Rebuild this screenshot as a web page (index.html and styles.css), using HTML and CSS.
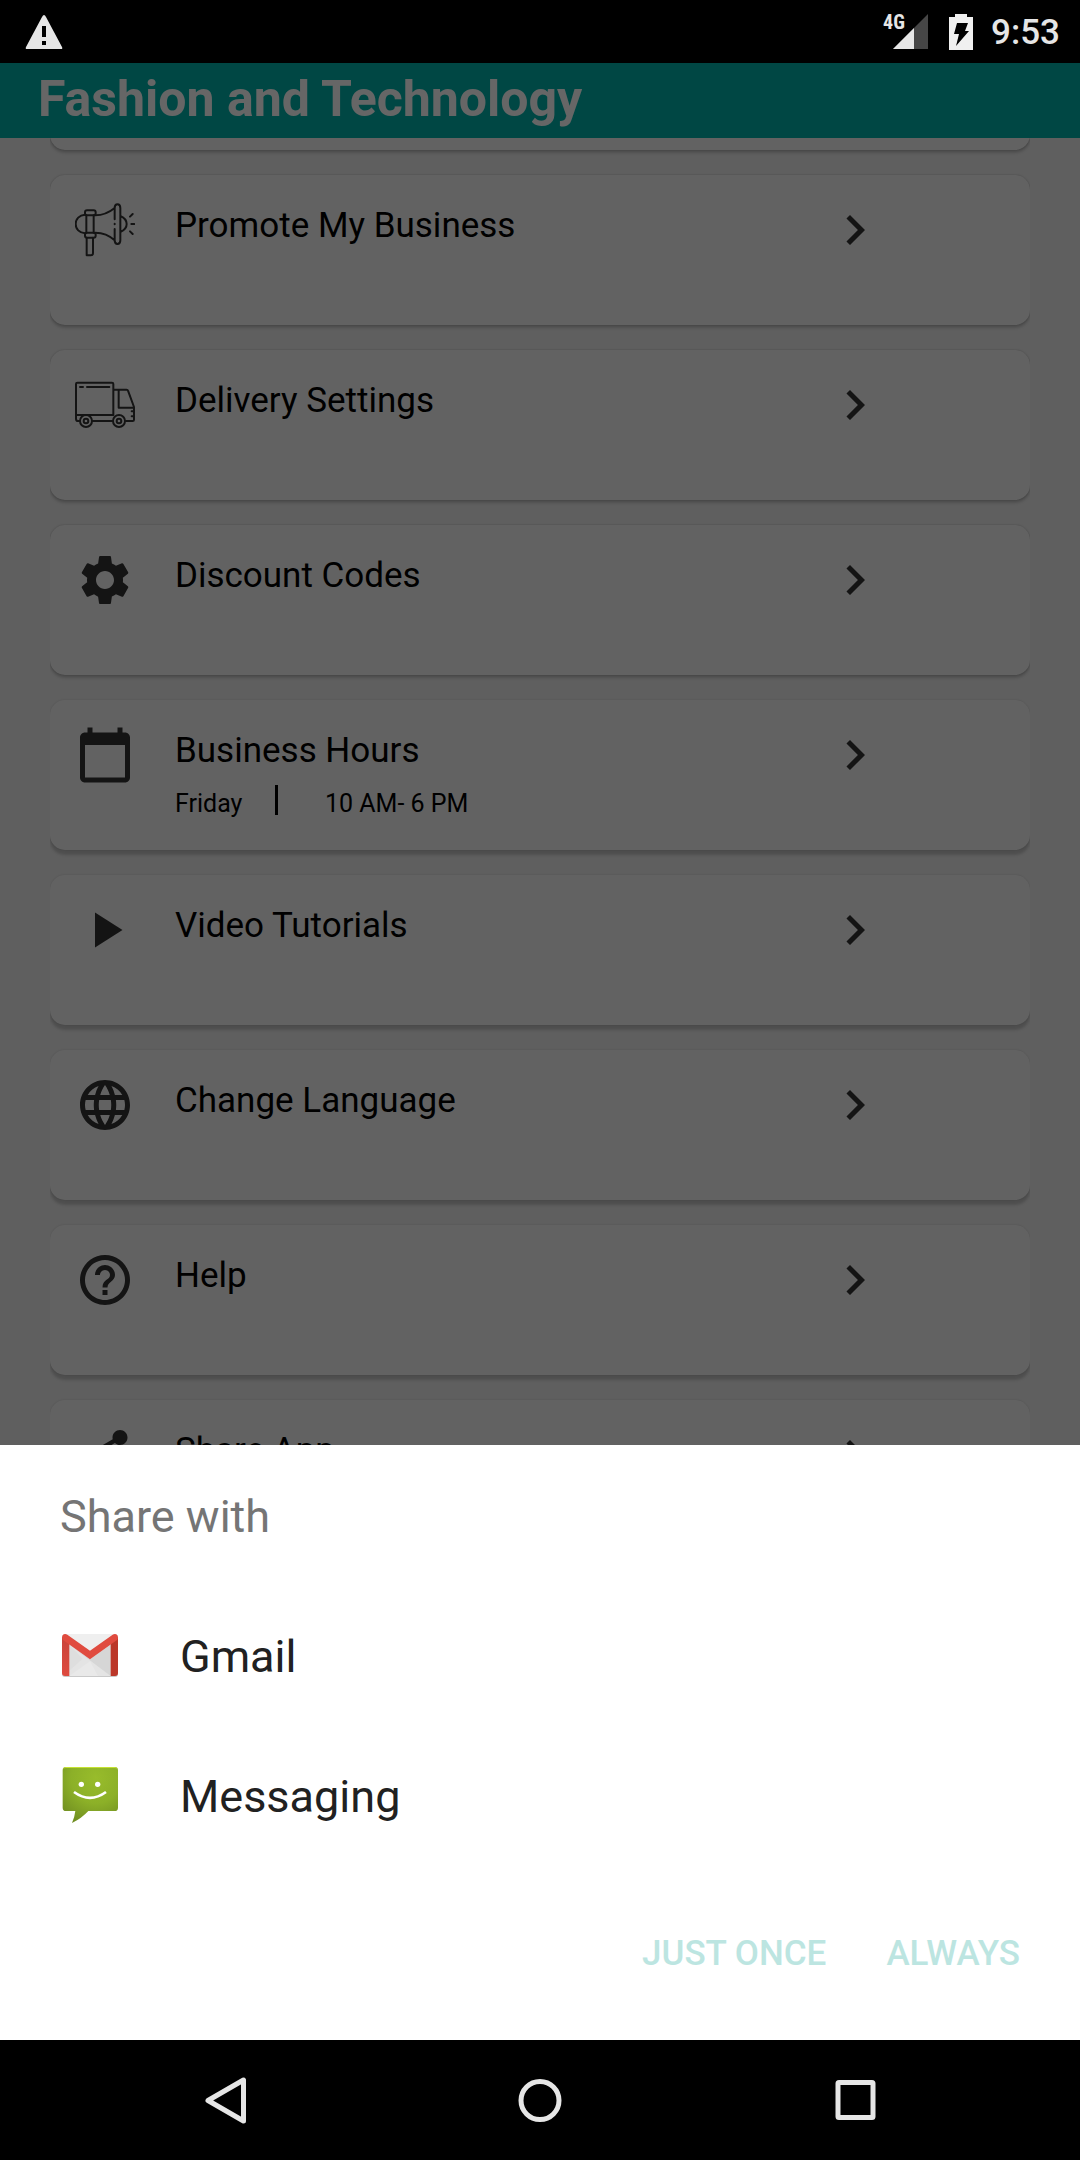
FILE: index.html
```html
<!DOCTYPE html>
<html lang="en">
<head>
<meta charset="utf-8">
<meta name="viewport" content="width=device-width, initial-scale=1">
<title>Fashion and Technology</title>
<link rel="stylesheet" href="styles.css">
</head>
<body>
<header class="status-bar">
  <svg class="status-warning" viewBox="0 0 40 36" aria-label="Warning"><path fill="#e6e6e6" fill-rule="evenodd" d="M20 1q1 0 2 2L38 33q1 2-1 2H3q-2 0-1-2L18 3q1-2 2-2zM18 12v11h4V12zM18 27v4h4v-4z"/></svg>
  <div class="status-icons">
    <div class="signal">
      <span class="signal-type">4G</span>
      <svg class="signal-bars" viewBox="0 0 35 35" aria-label="Signal"><path fill="#464646" d="M0 35L35 0v35z"/><path fill="#e6e6e6" d="M0 35L21 14v21z"/></svg>
    </div>
    <svg class="battery" viewBox="0 0 24 36" aria-label="Charging"><path fill="#f0f0f0" d="M6 0h12v3h6v33H0V3h6z"/><path fill="#000" d="M8 9h11l-3 8h4L7 32l3-12H5z"/></svg>
    <span class="clock">9:53</span>
  </div>
</header>

<div class="screen">
  <main class="app">
    <div class="app-bar"><h1 class="app-title">Fashion and Technology</h1></div>
    <div class="scroller">
      <ul class="menu">
        <li class="card"></li>
        <li class="card">
          <a class="card-link" href="#promote">
            <svg class="icon line-icon" viewBox="75 60 180 180"><path d="M105 104C88 105 77 117 77 132s11 27 28 28M109 106v52M131 106v52M110 173v53h13q6 0 6-7v-46M136 106c25 0 42-9 58-22M136 158c25 0 42 8 58 23M194 84v34M194 131v2M194 147v34M194 84c0-15 17-15 17 0v97c0 15-17 15-17 0M211 108c14 6 19 15 19 24s-5 18-19 24M240 110l8-8M244 132h9M240 154l8 8"/><rect x="105" y="91" width="32" height="15" rx="6"/><rect x="105" y="158" width="32" height="15" rx="6"/></svg>
            <span class="card-title">Promote My Business</span>
            <svg class="icon" viewBox="0 0 24 24"><path d="M10 6L8.59 7.41 13.17 12l-4.58 4.59L10 18l6-6z"/></svg>
          </a>
        </li>
        <li class="card">
          <a class="card-link" href="#delivery">
            <svg class="icon line-icon" viewBox="105 105 180 180"><path d="M108 225v-93q0-4 4-4h104q4 0 4 4v93zM120 141h9M141 141h67M220 149h40q3 0 4 3l18 49v38q0 4-4 4h-20M236 149v54h46M108 225v11q0 7 6 7h4M158 243h59M275 214h7M275 229h7"/><circle cx="138" cy="243" r="18"/><circle cx="138" cy="243" r="7"/><circle cx="237" cy="243" r="18"/><circle cx="237" cy="243" r="7"/></svg>
            <span class="card-title">Delivery Settings</span>
            <svg class="icon" viewBox="0 0 24 24"><path d="M10 6L8.59 7.41 13.17 12l-4.58 4.59L10 18l6-6z"/></svg>
          </a>
        </li>
        <li class="card">
          <a class="card-link" href="#discounts">
            <svg class="icon" viewBox="0 0 24 24"><path d="M19.14,12.94c0.04-0.3,0.06-0.61,0.06-0.94c0-0.32-0.02-0.64-0.07-0.94l2.03-1.58c0.18-0.14,0.23-0.41,0.12-0.61l-1.92-3.32c-0.12-0.22-0.37-0.29-0.59-0.22l-2.39,0.96c-0.5-0.38-1.03-0.7-1.62-0.94L14.4,2.81c-0.04-0.24-0.24-0.41-0.48-0.41h-3.84c-0.24,0-0.43,0.17-0.47,0.41L9.25,5.35C8.66,5.59,8.12,5.92,7.63,6.29L5.24,5.33c-0.22-0.08-0.47,0-0.59,0.22L2.74,8.87C2.62,9.08,2.66,9.34,2.86,9.48l2.03,1.58C4.84,11.36,4.8,11.69,4.8,12s0.02,0.64,0.07,0.94l-2.03,1.58c-0.18,0.14-0.23,0.41-0.12,0.61l1.92,3.32c0.12,0.22,0.37,0.29,0.59,0.22l2.39-0.96c0.5,0.38,1.03,0.7,1.62,0.94l0.36,2.54c0.05,0.24,0.24,0.41,0.48,0.41h3.84c0.24,0,0.44-0.17,0.47-0.41l0.36-2.54c0.59-0.24,1.13-0.56,1.62-0.94l2.39,0.96c0.22,0.08,0.47,0,0.59-0.22l1.92-3.32c0.12-0.22,0.07-0.47-0.12-0.61L19.14,12.94z M12,15.6c-1.98,0-3.6-1.62-3.6-3.6s1.62-3.6,3.6-3.6s3.6,1.62,3.6,3.6S13.98,15.6,12,15.6z"/></svg>
            <span class="card-title">Discount Codes</span>
            <svg class="icon" viewBox="0 0 24 24"><path d="M10 6L8.59 7.41 13.17 12l-4.58 4.59L10 18l6-6z"/></svg>
          </a>
        </li>
        <li class="card">
          <a class="card-link" href="#hours">
            <svg class="icon" viewBox="0 0 24 24"><path d="M20 3h-1V1h-2v2H7V1H5v2H4c-1.1 0-2 .9-2 2v16c0 1.1.9 2 2 2h16c1.1 0 2-.9 2-2V5c0-1.1-.9-2-2-2zm0 18H4V8h16v13z"/></svg>
            <span class="card-text">
              <span class="card-title">Business Hours</span>
              <span class="hours"><span class="hours-day">Friday</span><span class="hours-time">10 AM- 6 PM</span></span>
            </span>
            <svg class="icon" viewBox="0 0 24 24"><path d="M10 6L8.59 7.41 13.17 12l-4.58 4.59L10 18l6-6z"/></svg>
          </a>
        </li>
        <li class="card">
          <a class="card-link" href="#tutorials">
            <svg class="icon" viewBox="0 0 24 24"><path d="M8 5v14l11-7z"/></svg>
            <span class="card-title">Video Tutorials</span>
            <svg class="icon" viewBox="0 0 24 24"><path d="M10 6L8.59 7.41 13.17 12l-4.58 4.59L10 18l6-6z"/></svg>
          </a>
        </li>
        <li class="card">
          <a class="card-link" href="#language">
            <svg class="icon" viewBox="0 0 24 24"><path d="M11.99 2C6.47 2 2 6.48 2 12s4.47 10 9.99 10C17.52 22 22 17.52 22 12S17.52 2 11.99 2zm6.93 6h-2.95c-.32-1.25-.78-2.45-1.38-3.56 1.84.63 3.37 1.91 4.33 3.56zM12 4.04c.83 1.2 1.48 2.53 1.91 3.96h-3.82c.43-1.43 1.08-2.76 1.91-3.96zM4.26 14C4.1 13.36 4 12.69 4 12s.1-1.36.26-2h3.38c-.08.66-.14 1.32-.14 2 0 .68.06 1.34.14 2H4.26zm.82 2h2.95c.32 1.25.78 2.45 1.38 3.56-1.84-.63-3.37-1.9-4.33-3.56zm2.95-8H5.08c.96-1.66 2.49-2.93 4.33-3.56C8.81 5.55 8.35 6.75 8.03 8zM12 19.96c-.83-1.2-1.48-2.53-1.91-3.96h3.82c-.43 1.43-1.08 2.76-1.91 3.96zM14.34 14H9.66c-.09-.66-.16-1.32-.16-2 0-.68.07-1.35.16-2h4.68c.09.65.16 1.32.16 2 0 .68-.07 1.34-.16 2zm.25 5.56c.6-1.11 1.06-2.31 1.38-3.56h2.95c-.96 1.65-2.49 2.93-4.33 3.56zM16.36 14c.08-.66.14-1.32.14-2 0-.68-.06-1.34-.14-2h3.38c.16.64.26 1.31.26 2s-.1 1.36-.26 2h-3.38z"/></svg>
            <span class="card-title">Change Language</span>
            <svg class="icon" viewBox="0 0 24 24"><path d="M10 6L8.59 7.41 13.17 12l-4.58 4.59L10 18l6-6z"/></svg>
          </a>
        </li>
        <li class="card">
          <a class="card-link" href="#help">
            <svg class="icon" viewBox="0 0 24 24"><path d="M11 18h2v-2h-2v2zm1-16C6.48 2 2 6.48 2 12s4.48 10 10 10 10-4.48 10-10S17.52 2 12 2zm0 18c-4.41 0-8-3.59-8-8s3.59-8 8-8 8 3.59 8 8-3.59 8-8 8zm0-14c-2.21 0-4 1.79-4 4h2c0-1.1.9-2 2-2s2 .9 2 2c0 2-3 1.75-3 5h2c0-2.25 3-2.5 3-5 0-2.21-1.79-4-4-4z"/></svg>
            <span class="card-title">Help</span>
            <svg class="icon" viewBox="0 0 24 24"><path d="M10 6L8.59 7.41 13.17 12l-4.58 4.59L10 18l6-6z"/></svg>
          </a>
        </li>
        <li class="card">
          <a class="card-link" href="#share">
            <svg class="icon" viewBox="0 0 24 24"><path d="M18 16.08c-.76 0-1.44.3-1.96.77L8.91 12.7c.05-.23.09-.46.09-.7s-.04-.47-.09-.7l7.05-4.11c.54.5 1.25.81 2.04.81 1.66 0 3-1.34 3-3s-1.34-3-3-3-3 1.34-3 3c0 .24.04.47.09.7L8.04 9.81C7.5 9.31 6.79 9 6 9c-1.66 0-3 1.34-3 3s1.34 3 3 3c.79 0 1.5-.31 2.04-.81l7.12 4.16c-.05.21-.08.43-.08.65 0 1.61 1.31 2.92 2.92 2.92s2.92-1.31 2.92-2.92-1.31-2.92-2.92-2.92z"/></svg>
            <span class="card-title">Share App</span>
            <svg class="icon" viewBox="0 0 24 24"><path d="M10 6L8.59 7.41 13.17 12l-4.58 4.59L10 18l6-6z"/></svg>
          </a>
        </li>
      </ul>
    </div>
  </main>

  <div class="scrim"></div>

  <section class="sheet" role="dialog" aria-labelledby="sheet-title">
    <h2 class="sheet-title" id="sheet-title">Share with</h2>
    <button class="sheet-row" type="button">
      <svg class="sheet-icon" viewBox="60 75 180 180">
        <defs><linearGradient id="g-side" x1="0" y1="0" x2="0" y2="1"><stop offset="0" stop-color="#c9443a"/><stop offset="1" stop-color="#de4a3f"/></linearGradient></defs>
        <rect x="66" y="104" width="168" height="127" rx="9" fill="#c9c9c9"/>
        <path fill="#e4e4e4" d="M78 102h144v126H78z"/>
        <path fill="#d6d6d6" d="M88 134l62 44 62-44v94z"/>
        <path fill="#e9e9e9" d="M88 228l62-44 24 44z"/>
        <path fill="#dedede" d="M88 134l40 42-40 36z"/>
        <path fill="#efefef" d="M78 102h144l-72 52z"/>
        <path fill="url(#g-side)" d="M66 111l22 16v101H75q-9 0-9-9z"/>
        <path fill="#bb3729" d="M234 111l-22 16v101h13q9 0 9-9z"/>
        <path fill="#e04b3f" d="M66 113q0-7 5-10t11 1l68 48 68-48q6-4 11-1t5 10q0 5-4 8l-80 57-80-57q-4-3-4-8z"/>
      </svg>
      <span class="sheet-label">Gmail</span>
    </button>
    <button class="sheet-row" type="button">
      <svg class="sheet-icon" viewBox="60 495 180 180">
        <defs><radialGradient id="m-face" cx=".6" cy=".2" r=".9"><stop offset="0" stop-color="#98bc2b"/><stop offset=".5" stop-color="#8cb028"/><stop offset="1" stop-color="#6d8a20"/></radialGradient></defs>
        <path fill="url(#m-face)" d="M78 501h146q10 0 10 10v112q0 10-10 10h-79q-20 22-49 36 8-18 10-36H78q-10 0-10-10V511q0-10 10-10z"/>
        <path fill="#c5e233" d="M69 507q2-6 9-6h146q7 0 9 6-3-3-9-3H78q-6 0-9 3z"/>
        <circle cx="124" cy="553" r="8" fill="#fff"/><circle cx="173" cy="553" r="8" fill="#fff"/>
        <path fill="none" stroke="#fff" stroke-width="8" d="M102 576q48 35 96 0"/>
      </svg>
      <span class="sheet-label">Messaging</span>
    </button>
    <div class="sheet-actions">
      <button class="sheet-action" type="button">JUST ONCE</button>
      <button class="sheet-action" type="button">ALWAYS</button>
    </div>
  </section>
</div>

<nav class="nav-bar">
  <button class="nav-button" type="button" aria-label="Back"><svg class="nav-icon" viewBox="0 0 60 60"><path d="M48.500 10v41L13 30.500z"/></svg></button>
  <button class="nav-button" type="button" aria-label="Home"><svg class="nav-icon" viewBox="0 0 60 60"><circle cx="30" cy="30.500" r="19"/></svg></button>
  <button class="nav-button" type="button" aria-label="Recent apps"><svg class="nav-icon" viewBox="0 0 60 60"><rect x="13" y="12.500" width="35" height="35" rx="1"/></svg></button>
</nav>
</body>
</html>
```

FILE: styles.css
```css
* {
  box-sizing: border-box;
}

body {
  display: flex;
  flex-direction: column;
  height: 100vh;
  margin: 0;
  background: #000;
  font-family: Roboto, "Noto Sans", sans-serif;
}

button {
  margin: 0;
  padding: 0;
  border: 0;
  background: none;
  font: inherit;
  color: inherit;
}

/* Status bar */
.status-bar {
  display: flex;
  align-items: center;
  justify-content: space-between;
  height: 63px;
  padding: 0 20px 0 24px;
  color: #e6e6e6;
}

.status-warning {
  width: 40px;
  height: 36px;
}

.status-icons {
  display: flex;
  align-items: center;
  gap: 18px;
}

.signal {
  display: flex;
  position: relative;
  margin-right: 3px;
  padding-left: 10px;
}

.signal-type {
  position: absolute;
  top: -2px;
  left: 0;
  font-family: "Roboto Condensed", Roboto, sans-serif;
  font-size: 20px;
  line-height: 20px;
  font-weight: 700;
}

.signal-bars {
  width: 35px;
  height: 35px;
}

.battery {
  width: 24px;
  height: 36px;
}

.clock {
  padding-top: 2px;
  font-size: 35px;
  line-height: 41px;
  font-weight: 500;
}

/* App, scrim and sheet share one cell */
.screen {
  display: grid;
  grid-template: minmax(0, 1fr) / minmax(0, 1fr);
  flex: 1;
  min-height: 0;
}

.app,
.scrim,
.sheet {
  grid-area: 1 / 1;
}

.app {
  display: flex;
  flex-direction: column;
  min-height: 0;
  background: #ededed;
}

.app-bar {
  flex: none;
  padding: 0 38px;
  height: 75px;
  background: #00b2aa;
}

.app-title {
  margin: 0;
  font-size: 50px;
  line-height: 73px;
  font-weight: 700;
  color: #fff;
}

.scroller {
  flex: 1;
  min-height: 0;
  padding: 0 50px;
  overflow: hidden;
}

/* Scrolled so that only the foot of the first card shows */
.menu {
  display: flex;
  flex-direction: column;
  gap: 25px;
  margin: -138px 0 0;
  padding: 0;
  list-style: none;
  overflow: hidden;
}

.card {
  height: 150px;
  border-radius: 15px;
  background: #f6f6f6;
  box-shadow: 0 0 2px rgba(0, 0, 0, 0.25), 0 3px 3px rgba(0, 0, 0, 0.18);
}

.card:nth-child(n + 5) {
  box-shadow: 0 0 2px rgba(0, 0, 0, 0.15), 0 5px 3px rgba(0, 0, 0, 0.18);
}

.card-link {
  display: grid;
  grid-template-columns: 60px 1fr 60px;
  align-items: start;
  column-gap: 40px;
  padding: 25px 145px 0 25px;
  color: #000;
  text-decoration: none;
}

.icon {
  width: 60px;
  height: 60px;
  fill: #323232;
}

.line-icon {
  fill: none;
  stroke: #323232;
  stroke-width: 6;
  stroke-linecap: round;
  stroke-linejoin: round;
}

.card-text {
  display: flex;
  flex-direction: column;
}

.card-title {
  padding-top: 5px;
  font-size: 35px;
  line-height: 42px;
}

.hours {
  display: flex;
  margin-top: 13px;
  font-size: 25px;
  line-height: 38px;
}

.hours-day {
  width: 103px;
  height: 30px;
  border-right: 3px solid #000;
}

.hours-time {
  padding-left: 47px;
}

.scrim {
  background: rgba(0, 0, 0, 0.6);
}

/* Share sheet */
.sheet {
  display: flex;
  flex-direction: column;
  align-self: end;
  background: #fff;
  font-size: 45px;
  line-height: 60px;
  color: #212121;
  z-index: 1;
}

.sheet-title {
  margin: 0;
  padding: 42px 60px 38px;
  font-size: 45px;
  font-weight: 400;
  color: #757575;
}

.sheet-row {
  display: flex;
  align-items: center;
  gap: 60px;
  height: 140px;
  padding: 0 60px;
  text-align: left;
}

.sheet-icon {
  width: 60px;
  height: 60px;
}

.sheet-label,
.sheet-action {
  padding-top: 3px;
}

.sheet-actions {
  display: flex;
  align-items: center;
  justify-content: flex-end;
  gap: 60px;
  height: 175px;
  padding: 0 60px;
}

.sheet-action {
  font-size: 35px;
  font-weight: 500;
  color: #bce5e1;
}

/* Navigation bar */
.nav-bar {
  display: grid;
  grid-template-columns: repeat(3, 1fr);
  height: 120px;
  padding: 0 68px;
}

.nav-button {
  display: flex;
  align-items: center;
  justify-content: center;
}

.nav-icon {
  width: 60px;
  height: 60px;
  fill: none;
  stroke: #e6e6e6;
  stroke-width: 5;
  stroke-linejoin: round;
}
```
